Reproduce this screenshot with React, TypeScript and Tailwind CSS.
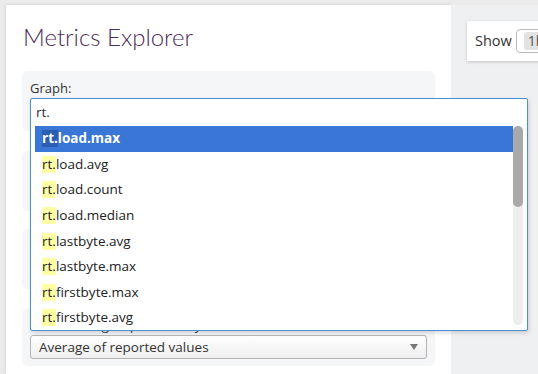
import React from "react";

const items = [
  "load.max",
  "load.avg",
  "load.count",
  "load.median",
  "lastbyte.avg",
  "lastbyte.max",
  "firstbyte.max",
  "firstbyte.avg",
];

// Gray form group box on the panel
function Group({ label, children }: { label: string; children?: React.ReactNode }) {
  return (
    <div className="rounded-md bg-[#f5f6f8] px-2 pt-[8px] pb-[7px]">
      <div className="mb-[1px] text-[13px] leading-[18px] text-[#333]">{label}</div>
      {children ?? <div className="h-[26px] rounded-[3px] border border-[#ccc] bg-white" />}
    </div>
  );
}

function Autocomplete() {
  return (
    <div className="absolute left-[30px] top-[98px] w-[498px] h-[233px] rounded-[2px] border border-[#4a90d9] bg-white shadow-[1px_2px_4px_rgba(0,0,0,0.15)]">
      <div className="h-[27px] px-[5px] pt-[4px] text-[13.5px] leading-[18px] text-[#333]">rt.</div>
      <div className="flex h-[203px] overflow-hidden pl-[4px] pr-[4px]">
        <ul className="flex-1">
          {items.map((name, i) => {
            const active = i === 0;
            return (
              <li
                key={name}
                className={`flex h-[25.6px] items-center pl-[7px] text-[13.5px] ${
                  active ? "bg-[#3a76d6] font-bold text-white" : "text-[#222]"
                }`}
              >
                <span className={`leading-[17px] ${active ? "bg-[#2b5db0]" : "bg-[#ffffa6]"}`}>rt.</span>
                <span className="leading-[17px]">{name}</span>
              </li>
            );
          })}
        </ul>
        <div className="h-[199px] w-[10px] rounded-full bg-[#eeeeee]">
          <div className="h-[81px] w-[10px] rounded-full bg-[#a9a9a9]" />
        </div>
      </div>
    </div>
  );
}

export default function App() {
  return (
    <div
      className="relative flex h-[374px] w-[538px] overflow-hidden bg-[#ebebeb] pl-[6px] pt-[5px]"
      style={{ fontFamily: '"Open Sans", "Noto Sans", sans-serif' }}
    >
      <main className="w-[445px] shrink-0 bg-white px-4 pt-[16px] shadow-[0_0_3px_rgba(0,0,0,0.15)]">
        <h1
          className="pl-[1px] text-[24px] font-light leading-[32px] text-[#4e2c56]"
          style={{ fontFamily: "Lato, 'Open Sans', sans-serif" }}
        >
          Metrics Explorer
        </h1>
        <div className="mt-[18px] flex flex-col">
          <Group label="Graph:">
            <div className="h-[26px]" />
          </Group>
          <div className="mt-[20px]">
            <Group label="Filter by:" />
          </div>
          <div className="mt-[18px]">
            <Group label="Group by:" />
          </div>
          <div className="mt-[19px]">
            <Group label="Summarize grouped data by:">
              <div className="flex h-[24px] items-center justify-between rounded-[3px] border border-[#b5b5b5] bg-gradient-to-b from-white to-[#eeeeee] pl-[8px] pr-[8px] text-[13.5px] text-[#333]">
                <span>Average of reported values</span>
                <svg width="8" height="6" viewBox="0 0 8 6">
                  <path d="M0 0 H8 L4 6 Z" fill="#777" />
                </svg>
              </div>
            </Group>
          </div>
        </div>
      </main>
      <aside className="flex-1 bg-[#eff0f2] pl-4 pt-4">
        <div className="flex h-[40px] w-[100px] items-center gap-[4px] bg-white pl-[8px] shadow-[0_1px_3px_rgba(0,0,0,0.2)]">
          <span className="text-[14.5px] text-[#333]">Show</span>
          <div className="flex h-[24px] items-center rounded-[4px] border border-[#bbb] bg-white pl-[7px]">
            <span className="rounded-[3px] bg-[#e3e3e3] px-[4px] text-[14px] leading-[18px] text-[#555]">1h</span>
          </div>
        </div>
      </aside>
      <Autocomplete />
    </div>
  );
}
